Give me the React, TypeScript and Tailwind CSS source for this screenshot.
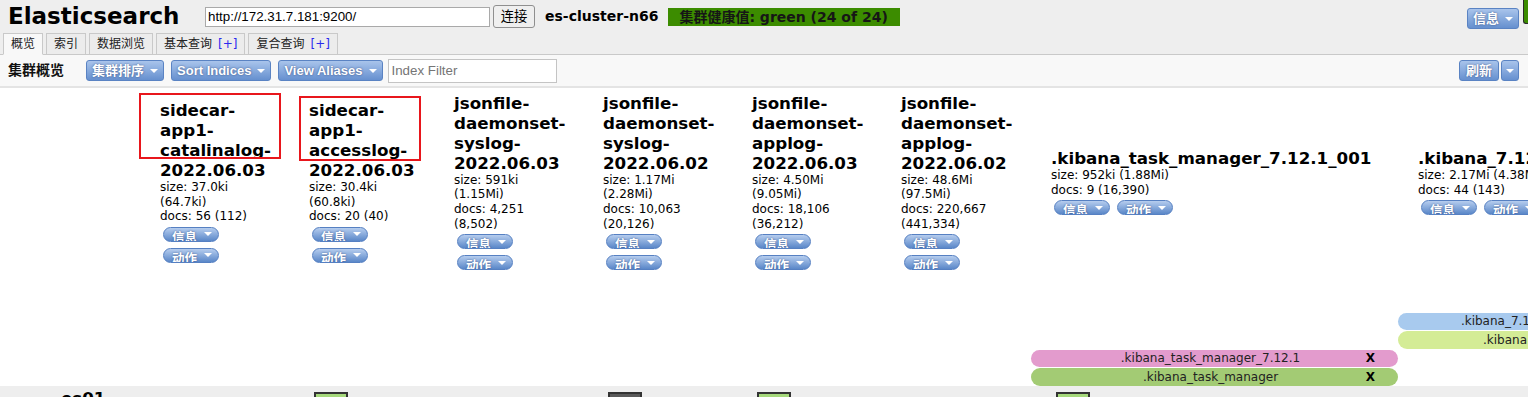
import React from "react";

const V = "font-['DejaVu_Sans','Noto_Sans_CJK_SC',sans-serif]";
const A = "font-['Liberation_Sans','Noto_Sans_CJK_SC',sans-serif]";

const Caret = () => (
  <span className="inline-block w-0 h-0 shrink-0 border-x-[4px] border-x-transparent border-t-[4px] border-t-white" />
);

function Btn({ children, caret = true, className = "" }: { children?: React.ReactNode; caret?: boolean; className?: string }) {
  return (
    <div
      className={`h-[21px] shrink-0 flex items-center justify-center gap-[6px] px-[5px] rounded-[3px] border border-[#5a83c3] bg-linear-to-b from-[#a9c4eb] to-[#6690cf] text-white font-bold text-[13px] leading-none whitespace-nowrap [text-shadow:0_0_2px_rgba(20,40,90,0.7)] ${A} ${className}`}
    >
      {children && <span>{children}</span>}
      {caret && <Caret />}
    </div>
  );
}

function Pill({ label }: { label: string }) {
  return (
    <div
      className={`w-[56px] h-[15px] shrink-0 rounded-full border border-[#5680c2] bg-linear-to-b from-[#b6cdee] to-[#5a87c8] overflow-hidden flex pl-[8px] text-white font-bold text-[12.5px] leading-[14px] whitespace-nowrap [text-shadow:0_0_2px_rgba(20,40,90,0.6)] ${V}`}
    >
      <span className="pt-[3px] self-start">{label}</span>
      <span className="ml-[7px] self-center flex">
        <Caret />
      </span>
    </div>
  );
}

function Tab({ label, plus, active }: { label: string; plus?: boolean; active?: boolean }) {
  return (
    <div
      className={`h-[22px] -mb-px px-[7px] flex items-center border border-[#c9c9c9] ${
        active ? "bg-[#f8f8f8] border-b-[#f8f8f8]" : "bg-[#ececec]"
      } text-[12px] text-[#222] ${V}`}
    >
      <span>{label}</span>
      {plus && <span className="ml-[6px] text-[#2a2aee]">[+]</span>}
    </div>
  );
}

type Col = {
  w: string;
  title: string;
  size: string;
  docs: string;
  narrow: boolean;
  shard?: "green" | "dark";
};

const cols: Col[] = [
  { w: "w-[149px]", title: "sidecar-app1-catalinalog-2022.06.03", size: "size: 37.0ki (64.7ki)", docs: "docs: 56 (112)", narrow: true },
  { w: "w-[145px]", title: "sidecar-app1-accesslog-2022.06.03", size: "size: 30.4ki (60.8ki)", docs: "docs: 20 (40)", narrow: true, shard: "green" },
  { w: "w-[149px]", title: "jsonfile-daemonset-syslog-2022.06.03", size: "size: 591ki (1.15Mi)", docs: "docs: 4,251 (8,502)", narrow: true },
  { w: "w-[149px]", title: "jsonfile-daemonset-syslog-2022.06.02", size: "size: 1.17Mi (2.28Mi)", docs: "docs: 10,063 (20,126)", narrow: true, shard: "dark" },
  { w: "w-[149px]", title: "jsonfile-daemonset-applog-2022.06.03", size: "size: 4.50Mi (9.05Mi)", docs: "docs: 18,106 (36,212)", narrow: true, shard: "green" },
  { w: "w-[150px]", title: "jsonfile-daemonset-applog-2022.06.02", size: "size: 48.6Mi (97.5Mi)", docs: "docs: 220,667 (441,334)", narrow: true },
  { w: "w-[367px]", title: ".kibana_task_manager_7.12.1_001", size: "size: 952ki (1.88Mi)", docs: "docs: 9 (16,390)", narrow: false, shard: "green" },
  { w: "w-[222px]", title: ".kibana_7.12.1_001", size: "size: 2.17Mi (4.38Mi)", docs: "docs: 44 (143)", narrow: false },
];

type Alias = { col: number; name: string; bg: string } | null;
const aliasRows: Alias[] = [
  null,
  null,
  { col: 7, name: ".kibana_7.12.1", bg: "bg-[#a8caee]" },
  { col: 7, name: ".kibana", bg: "bg-[#d4ec96]" },
  { col: 6, name: ".kibana_task_manager_7.12.1", bg: "bg-[#e39bcd]" },
  { col: 6, name: ".kibana_task_manager", bg: "bg-[#a3cb74]" },
];

function Title({ text }: { text: string }) {
  const parts = text.split(/(?<=-)/);
  return (
    <div className={`font-bold text-[16.7px] leading-[20px] text-black ${V}`}>
      {parts.map((p, i) => (
        <React.Fragment key={i}>
          {p}
          {i < parts.length - 1 && <wbr />}
        </React.Fragment>
      ))}
    </div>
  );
}

export default function App() {
  return (
    <div className={`w-[1528px] h-[397px] overflow-hidden bg-white relative text-black ${V}`}>
      {/* header */}
      <div className="bg-[#eeeeee]">
        <div className="h-[33px] flex items-center pl-[8px]">
          <span className={`w-[197px] shrink-0 text-[23px] font-bold leading-none ${V}`}>Elasticsearch</span>
          <input
            readOnly
            value="http://172.31.7.181:9200/"
            className={`w-[285px] h-[20px] shrink-0 border border-[#a9a9a9] bg-white px-[2px] text-[13.333px] text-black outline-none ${A}`}
          />
          <div
            className={`ml-[3px] w-[42px] h-[23px] shrink-0 flex items-center justify-center border border-[#8f8f8f] rounded-[3px] bg-[#efefef] text-[13.333px] text-black ${A}`}
          >
            连接
          </div>
          <span className={`ml-[10px] shrink-0 font-bold text-[14px] ${V}`}>es-cluster-n66</span>
          <div
            className={`ml-[10px] w-[232px] h-[18px] shrink-0 pl-[11px] bg-[#3c8c00] font-bold text-[14px] leading-[18px] text-[#161616] whitespace-nowrap ${V}`}
          >
            集群健康值: green (24 of 24)
          </div>
          <Btn className="ml-auto mt-[4px] gap-[5px] px-[4px]">信息</Btn>
          <div className="ml-[4px] self-start w-[5px] h-[24px] shrink-0 bg-[#3c8c00] border-l border-b border-[#2b2b2b] rounded-bl-[3px]" />
        </div>
        <div className="h-[22px] flex items-end gap-[3px] pl-[3px] border-b border-[#c9c9c9]">
          <Tab label="概览" active />
          <Tab label="索引" />
          <Tab label="数据浏览" />
          <Tab label="基本查询" plus />
          <Tab label="复合查询" plus />
        </div>
      </div>

      {/* toolbar */}
      <div className="h-[33px] bg-[#f8f8f8] border-b-2 border-[#e4e4e4] flex items-center pl-[8px] pr-[9px]">
        <span className={`font-bold text-[14px] text-[#111] w-[78px] shrink-0 ${V}`}>集群概览</span>
        <Btn>集群排序</Btn>
        <Btn className="ml-[7px]">Sort Indices</Btn>
        <Btn className="ml-[7px]">View Aliases</Btn>
        <input
          readOnly
          placeholder="Index Filter"
          className={`ml-[5px] w-[169px] h-[24px] border border-[#c4c4c4] bg-white px-[3px] text-[13.333px] placeholder:text-[#757575] outline-none ${A}`}
        />
        <Btn caret={false} className="ml-auto w-[40px]">刷新</Btn>
        <Btn className="ml-[2px] w-[18px] px-0">{null}</Btn>
      </div>

      {/* index header row */}
      <div className="flex">
        <div className="w-[140px] shrink-0" />
        {cols.map((c, i) => (
          <div key={i} className={`${c.w} shrink-0 h-[187px] flex items-center pl-[20px]`}>
            <div className={c.narrow ? "w-[114px]" : ""}>
              <Title text={c.title} />
              <div className="text-[12px] leading-[14.6px] text-black whitespace-normal">
                <div>{c.size}</div>
                <div>{c.docs}</div>
              </div>
              <div className="mt-[3px] ml-[3px] flex flex-wrap gap-x-[7px] gap-y-[6px]">
                <Pill label="信息" />
                <Pill label="动作" />
              </div>
            </div>
          </div>
        ))}
      </div>

      {/* alias rows */}
      {aliasRows.map((r, ri) => (
        <div key={ri} className="flex h-[18.5px]">
          <div className="w-[140px] shrink-0" />
          {cols.map((c, ci) => (
            <div key={ci} className={`${c.w} shrink-0 h-full py-[0.5px]`}>
              {r && r.col === ci && (
                <div
                  className={`relative h-full rounded-full ${r.bg} flex items-center justify-center pr-[8px] text-[12px] text-[#222] whitespace-nowrap`}
                >
                  <span>{r.name}</span>
                  <span className="absolute right-[23px] font-bold text-[12px] text-black">X</span>
                </div>
              )}
            </div>
          ))}
        </div>
      ))}

      {/* node row */}
      <div className="flex bg-[#eeeeee] h-[40px]">
        <div className="w-[140px] shrink-0 pl-[61px] pt-[2px] font-bold text-[16.7px] leading-[20px]">es01</div>
        {cols.map((c, ci) => (
          <div key={ci} className={`${c.w} shrink-0 pl-[25px] pt-[6px]`}>
            {c.shard && (
              <div
                className={`w-[34px] h-[24px] border-2 border-[#333] ${c.shard === "green" ? "bg-[#a6d97c]" : "bg-[#5a5a5a]"}`}
              />
            )}
          </div>
        ))}
      </div>

      {/* annotation boxes */}
      <div className="absolute left-[139px] top-[93px] w-[142px] h-[66px] border-2 border-[#e8161c] pointer-events-none" />
      <div className="absolute left-[299px] top-[96px] w-[122px] h-[65px] border-2 border-[#e8161c] pointer-events-none" />
    </div>
  );
}
